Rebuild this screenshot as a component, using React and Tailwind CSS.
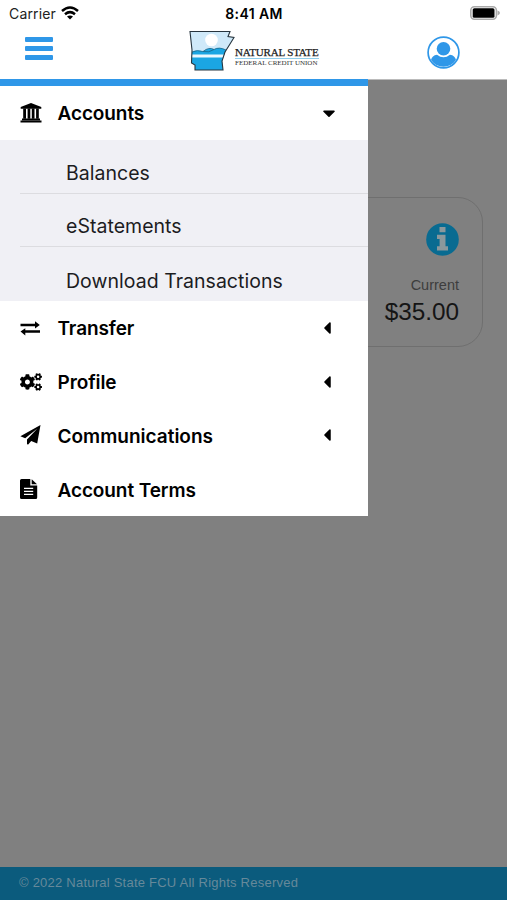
import { FaCogs, FaCaretDown, FaCaretLeft } from "react-icons/fa"

const SUB_ITEMS = ["Balances", "eStatements", "Download Transactions"]

function BankIcon() {
  return (
    <svg width="22" height="20" viewBox="0 0 22 20" fill="currentColor">
      <path d="M11 0L21.3 4V5.8H0.7V4Z" />
      <path d="M3.2 5.5H6V15.8H3.2ZM7.6 5.5H10.3V15.8H7.6ZM11.8 5.5H14.5V15.8H11.8ZM16.1 5.5H18.8V15.8H16.1Z" />
      <path d="M2 15.4H20V17.2H2ZM0.5 17.6H21.5V19.6H0.5Z" />
    </svg>
  )
}

function TransferIcon() {
  return (
    <svg width="21" height="16" viewBox="0 0 21 16" fill="none" stroke="currentColor" strokeWidth="2.5">
      <path d="M0.5 5H16.5M4 11.6H20" />
      <path d="M15 1.2L19.8 5L15 8.4ZM5.3 8.2L0.5 11.6L5.3 15.4Z" fill="currentColor" stroke="none" />
    </svg>
  )
}

function PlaneIcon() {
  return (
    <svg width="21" height="20" viewBox="0 0 21 20" fill="currentColor">
      <path d="M20.5 0L17.2 18.6L11.2 16L8.2 19.6L7 19.2V14.6L17.4 3.4L5.2 13.3L0.4 11.2Z" />
    </svg>
  )
}

function FileIcon() {
  return (
    <svg width="18" height="20" viewBox="0 0 18 20" fill="currentColor">
      <path d="M1.5 0H10.3V6.5H17.2V18.5Q17.2 20 15.7 20H1.5Q0 20 0 18.5V1.5Q0 0 1.5 0Z" />
      <path d="M11.7 0.2L17 5.2H11.7Z" />
      <path d="M4 9.3H13.2M4 12.3H13.2M4 15.3H13.2" stroke="#fff" strokeWidth="1.2" />
    </svg>
  )
}

const ITEMS = [
  { label: "Transfer",       icon: <TransferIcon />,     caret: true,  text: "tracking-[-0.1px]" },
  { label: "Profile",        icon: <FaCogs size={22} />, caret: true,  text: "tracking-[-0.1px]" },
  { label: "Communications", icon: <PlaneIcon />,        caret: true,  text: "tracking-[0px]" },
  { label: "Account Terms",  icon: <FileIcon />,         caret: false, text: "tracking-[-0.1px]" },
]

function StatusBar() {
  return (
    <div className="grid h-[27px] grid-cols-3 items-center pl-[9px] pr-[7px] text-[14px] text-[#222]">
      <div className="flex items-center gap-[5px]">
        <span className="tracking-[0.15px]">Carrier</span>
        <svg className="-mt-[1px]" width="18" height="14" viewBox="0 0 18 14" fill="none" stroke="#000" strokeWidth="2.5">
          <path d="M1 5Q9 -2 17 5" />
          <path d="M4 8.2Q9 4 14 8.2" />
          <path d="M9 13.5L6 10.6Q9 8.4 12 10.6Z" fill="#000" stroke="none" />
        </svg>
      </div>
      <div className="-ml-[1px] text-center text-[14px] font-semibold tracking-[0.4px] whitespace-nowrap text-black">8:41 AM</div>
      <svg className="-mt-[1px] justify-self-end" width="30" height="14" viewBox="0 0 30 14">
        <rect x="0.8" y="0.8" width="25.6" height="12.4" rx="3.6" fill="#fff" stroke="#aaa" strokeWidth="1.6" />
        <rect x="2.7" y="2.2" width="21.8" height="9.6" rx="1.6" fill="#000" />
        <path d="M27.5 4.6Q30 5.6 30 7T27.5 9.4Z" fill="#aaa" />
      </svg>
    </div>
  )
}

function Logo() {
  return (
    <div className="flex">
      <svg width="46" height="42" viewBox="0 0 46 42">
        <path d="M1 1.5H41L39 6.5L45 7.5L41 14L36 22L33 31L34 40H6V35L2.5 33L3 20Z" fill="#cfe9f9" />
        <circle cx="22.5" cy="10" r="6.3" fill="#fff" />
        <path d="M3 22Q8 19.5 14 21.5Q20 16.5 25 19.5Q30 16.5 37 20L33 31L34 40H6V35L2.5 33Z" fill="#1ba6e3" />
        <path d="M3 24.5H35L34 27.5H3Z" fill="#eaf8ff" />
        <path d="M3 22Q8 19.5 14 21.5Q20 16.5 25 19.5Q30 16.5 37 20M14 21.5Q20 23 25 19.5" fill="none" stroke="#176489" strokeWidth="0.8" />
        <path d="M1 1.5H41L39 6.5L45 7.5L41 14L36 22L33 31L34 40H6V35L2.5 33L3 20Z" fill="none" stroke="#26343e" strokeWidth="1.1" />
      </svg>
      <div className="flex flex-col pt-[17px] font-['Liberation_Serif',serif] leading-none whitespace-nowrap">
        <span className="h-[11px] text-[11px] tracking-[-0.18px] text-[#222] [-webkit-text-stroke:0.25px_#222]">NATURAL STATE</span>
        <span className="h-px w-[84px] bg-[#8fcdec]" />
        <span className="pt-[1px] text-[7px] text-[#333]">FEDERAL CREDIT UNION</span>
      </div>
    </div>
  )
}

function Header() {
  return (
    <header className="h-[80px] border-b border-[#bbb] bg-white">
      <StatusBar />
      <div className="flex items-start">
        <div className="flex w-[189px] flex-col gap-[4px] pt-[10px] pl-[25px]">
          <span className="h-[5px] w-[28px] rounded-[1px] bg-[#2f97e8]" />
          <span className="h-[5px] w-[28px] rounded-[1px] bg-[#2f97e8]" />
          <span className="h-[5px] w-[28px] rounded-[1px] bg-[#2f97e8]" />
        </div>
        <div className="w-[238px] pt-[3px]"><Logo /></div>
        <svg className="mt-[9px]" width="33" height="33" viewBox="0 0 33 33">
          <circle cx="16.5" cy="16.5" r="15.4" fill="#fff" stroke="#2f97e8" strokeWidth="1.7" />
          <circle cx="16.5" cy="12.7" r="6.8" fill="#2f97e8" />
          <path d="M4 24Q5 19.5 10 18.8Q16.5 23.8 23 18.8Q28 19.5 29 24A15 15 0 0 1 4 24Z" fill="#2f97e8" />
        </svg>
      </div>
    </header>
  )
}

function Menu() {
  return (
    <nav className="absolute top-[79px] left-0 w-[368px] border-t-[7px] border-[#2f97e8] bg-white text-black">
      <div className="flex h-[54px] items-center pr-[29px] pl-[20px]">
        <span className="w-[37.5px]"><BankIcon /></span>
        <span className="flex-1 pt-[2px] text-[19px] font-semibold tracking-[-0.1px]">Accounts</span>
        <FaCaretDown size={20} />
      </div>
      <div className="h-[161px] bg-[#f0f0f5] pl-[20px]">
        {SUB_ITEMS.map((s, i) => (
          <div
            key={s}
            className={`flex h-[53.7px] items-center pt-[14px] pl-[46px] text-[19.5px] tracking-[0.03px] text-[#1c1c1f] ${i < 2 ? "border-b border-[#dcdce0]" : ""}`}
          >{s}</div>
        ))}
      </div>
      {ITEMS.map(it => (
        <div key={it.label} className="flex h-[53.8px] items-center pr-[31px] pl-[20px]">
          <span className="w-[37.5px]">{it.icon}</span>
          <span className={`flex-1 pt-[3px] text-[19px] font-semibold ${it.text}`}>{it.label}</span>
          {it.caret && <FaCaretLeft size={20} />}
        </div>
      ))}
    </nav>
  )
}

export default function App() {
  return (
    <div className="relative flex h-[900px] w-[507px] flex-col overflow-hidden bg-[#808080] font-[Inter,sans-serif]">
      <Header />
      <main className="flex-1 pt-[117px] pr-[24px] font-['Liberation_Sans',sans-serif]">
        <div className="flex h-[150px] flex-col items-end rounded-r-[25px] border border-[#6f6f6f] pt-[25px] pr-[23px]">
          <svg width="33" height="33" viewBox="0 0 33 33">
            <circle cx="16.5" cy="16.5" r="16.3" fill="#096b91" />
            <path d="M13.5 4H19.5V9.2H13.5ZM11 11.8H19.5V23.2H22V27.5H11V23.2H13.6V16H11Z" fill="#8b989c" />
          </svg>
          <span className="mt-[20px] text-[14.5px] leading-[18px] text-[#3d3d3d]">Current</span>
          <span className="mt-[4px] text-[24.3px] leading-[28px] text-[#151515]">$35.00</span>
        </div>
      </main>
      <footer className="flex h-[33px] items-center bg-[#0b5b7d] pl-[19px] font-['Liberation_Sans',sans-serif] text-[13px] text-[#66899a]">
        <span className="pb-[2px] tracking-[0.23px]">© 2022 Natural State FCU All Rights Reserved</span>
      </footer>
      <Menu />
    </div>
  )
}
